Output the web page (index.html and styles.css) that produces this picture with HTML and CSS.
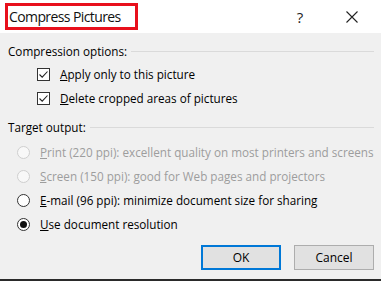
FILE: index.html
```html
<!DOCTYPE html>
<html lang="en">
<head>
    <meta charset="UTF-8">
    <title>Compress Pictures</title>
    <link rel="stylesheet" href="styles.css">
</head>
<body>
    <div class="dialog">
        <div class="titlebar">
            <span class="title">Compress Pictures</span>
            <span class="help">?</span>
            <span class="close">
                <svg width="12" height="12" viewBox="0 0 12 12"><path d="M0.5 0.5 L11.5 11.5 M11.5 0.5 L0.5 11.5" stroke="#222" stroke-width="1.1" fill="none"/></svg>
            </span>
        </div>

        <div class="content">
            <div class="group">
                <div class="group-head"><span>Compression options:</span><i class="rule"></i></div>
                <div class="options checks">
                    <label class="option">
                        <span class="box"><svg width="11" height="11" viewBox="0 0 11 11"><path d="M1.5 5.5 L4.2 8.2 L9.5 2.5" stroke="#222" stroke-width="1.1" fill="none"/></svg></span>
                        <span><u>A</u>pply only to this picture</span>
                    </label>
                    <label class="option">
                        <span class="box"><svg width="11" height="11" viewBox="0 0 11 11"><path d="M1.5 5.5 L4.2 8.2 L9.5 2.5" stroke="#222" stroke-width="1.1" fill="none"/></svg></span>
                        <span><u>D</u>elete cropped areas of pictures</span>
                    </label>
                </div>
            </div>

            <div class="group">
                <div class="group-head"><span>Target output:</span><i class="rule"></i></div>
                <div class="options radios">
                    <label class="option disabled"><span class="radio"></span><span><u>P</u>rint (220 ppi): excellent quality on most printers and screens</span></label>
                    <label class="option disabled"><span class="radio"></span><span><u>S</u>creen (150 ppi): good for Web pages and projectors</span></label>
                    <label class="option"><span class="radio"></span><span><u>E</u>-mail (96 ppi): minimize document size for sharing</span></label>
                    <label class="option"><span class="radio selected"></span><span><u>U</u>se document resolution</span></label>
                </div>
            </div>

            <div class="buttons">
                <button class="btn default">OK</button>
                <button class="btn">Cancel</button>
            </div>
        </div>
    </div>
</body>
</html>
```

FILE: styles.css
```css
body {
    margin: 0;
    padding: 0;
    font-family: 'Open Sans', 'Noto Sans', sans-serif;
    font-size: 11.7px;
    color: #000;
    background: #f0f0f0;
}

.dialog {
    width: 381px;
    height: 281px;
    display: flex;
    flex-direction: column;
    background: #f0f0f0;
    border-bottom: 2px solid #2a2a2a;
    box-sizing: border-box;
}

.titlebar {
    height: 33px;
    flex-shrink: 0;
    background: #fff;
    display: flex;
    align-items: center;
    padding-left: 5px;
}

.title {
    border: 3px solid #e8101c;
    height: 21px;
    width: 126px;
    padding-left: 1px;
    font-size: 14px;
    letter-spacing: -0.6px;
    line-height: 21px;
    color: #111;
    white-space: nowrap;
    flex-shrink: 0;
}

.help {
    margin-left: auto;
    font-size: 15px;
    color: #222;
    width: 12px;
    text-align: center;
}

.close {
    display: flex;
    margin-left: 40px;
    margin-right: 23px;
}

.content {
    flex: 1;
    padding: 8px 7px 0 8px;
    display: flex;
    flex-direction: column;
}

.group + .group {
    margin-top: 7px;
}

.group-head {
    height: 20px;
    display: flex;
    align-items: center;
    gap: 4px;
}

.rule {
    flex: 1;
    height: 1px;
    background: #dadada;
    margin-top: 1px;
}

.options {
    display: flex;
    flex-direction: column;
}

.checks {
    margin-top: 1px;
    padding-left: 29px;
}

.radios {
    margin-top: 3px;
    padding-left: 9px;
}

.option {
    height: 24px;
    display: flex;
    align-items: center;
    white-space: nowrap;
}

.box {
    width: 11px;
    height: 11px;
    flex-shrink: 0;
    border: 1px solid #333;
    background: #fff;
    margin-right: 10px;
    display: flex;
}

.radio {
    width: 11px;
    height: 11px;
    flex-shrink: 0;
    border: 1px solid #333;
    border-radius: 50%;
    background: #fff;
    margin-right: 10px;
    position: relative;
}

.radio.selected::after {
    content: '';
    position: absolute;
    left: 2px;
    top: 2px;
    width: 7px;
    height: 7px;
    border-radius: 50%;
    background: #111;
}

.disabled {
    color: #9d9d9d;
}

.disabled .radio {
    border-color: #cfcfcf;
    background: #f8f8f8;
}

.buttons {
    margin-top: 9px;
    display: flex;
    justify-content: flex-end;
    gap: 13px;
}

.btn {
    width: 80px;
    height: 25px;
    font-family: inherit;
    font-size: 12px;
    color: #000;
    background: #e1e1e1;
    border: 1px solid #adadad;
    padding: 0;
}

.btn.default {
    border: 2px solid #0078d7;
}
```
